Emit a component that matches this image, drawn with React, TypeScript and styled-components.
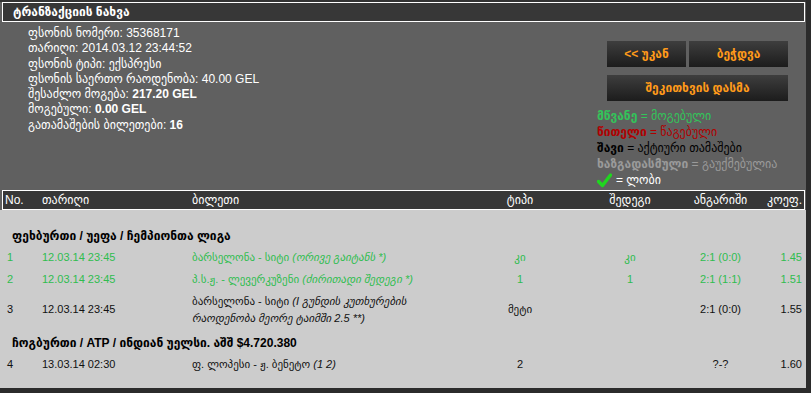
import React from "react";
import styled, { createGlobalStyle } from "styled-components";

const GlobalStyle = createGlobalStyle`
  html, body { margin: 0; padding: 0; background: #2b2b2b; }
  body {
    font-family: "Liberation Sans", "DejaVu Sans", sans-serif;
    font-size: 12px;
    color: #fff;
  }
`;

const Window = styled.div`
  width: 806px;
  height: 388px;
  box-sizing: border-box;
  border-top: 2px solid #333;
  background: #606060;
  display: flex;
  flex-direction: column;
`;

const TitleBar = styled.div`
  margin: 0 1px 0 2px;
  height: 18px;
  line-height: 18px;
  border: 1px solid #fff;
  background: #373737;
  color: #fff;
  font-weight: bold;
  font-size: 12px;
  padding-left: 10px;
`;

const Summary = styled.div`
  display: flex;
  height: 168px;
  box-sizing: border-box;
  padding-top: 4px;
`;

const InfoList = styled.div`
  flex: 1;
  padding-left: 28px;
  line-height: 15.25px;
  font-size: 12px;
`;

const InfoLine = styled.div``;

const Value = styled.span<{ $bold?: boolean }>`
  font-weight: ${(p) => (p.$bold ? "bold" : "normal")};
`;

const SidePanel = styled.div`
  width: 209px;
  padding-top: 15px;
`;

const ButtonGrid = styled.div`
  margin-left: 10px;
  display: grid;
  grid-template-columns: 79px 99px;
  column-gap: 3px;
  row-gap: 8px;
`;

const ActionButton = styled.button<{ $wide?: boolean }>`
  grid-column: ${(p) => (p.$wide ? "1 / -1" : "auto")};
  height: 26px;
  border: none;
  padding: 0;
  background: linear-gradient(#3e3e3e, #1c1c1c);
  color: #ff9a1a;
  font-family: "Liberation Sans", "DejaVu Sans", sans-serif;
  font-weight: bold;
  font-size: 12px;
  cursor: pointer;
`;

const Legend = styled.div`
  margin-top: 7px;
  line-height: 16px;
  font-size: 12px;
`;

const LegendLine = styled.div<{ $color: string }>`
  color: ${(p) => p.$color};
  display: flex;
  align-items: center;
  gap: 4px;
  white-space: nowrap;
`;

const LegendKey = styled.b``;

const TableHead = styled.div`
  margin: 0 1px 0 2px;
  height: 18px;
  border: 1px solid #fff;
  background: #373737;
  display: grid;
  grid-template-columns: 39px 150px 278px 100px 120px 61px 1fr;
  align-items: center;
  font-size: 12px;
  color: #fff;
`;

const HeadCell = styled.div<{ $align?: string; $pl?: number; $pr?: number }>`
  text-align: ${(p) => p.$align || "left"};
  padding-left: ${(p) => p.$pl || 0}px;
  padding-right: ${(p) => p.$pr || 0}px;
  white-space: nowrap;
`;

const TableBody = styled.div`
  flex: 1;
  background: #cccccc;
  padding: 0 2px 0 3px;
`;

const GroupTitle = styled.div<{ $top: number }>`
  padding: ${(p) => p.$top}px 0 2px 9px;
  line-height: 16px;
  font-weight: bold;
  font-size: 12px;
  color: #000;
`;

const BetRow = styled.div<{ $color: string }>`
  display: grid;
  grid-template-columns: 39px 150px 278px 100px 120px 61px 1fr;
  align-items: center;
  padding: 2.5px 0;
  line-height: 17px;
  font-size: 11px;
  color: ${(p) => p.$color};
`;

const Cell = styled.div<{ $align?: string; $pl?: number; $pr?: number }>`
  text-align: ${(p) => p.$align || "left"};
  padding-left: ${(p) => p.$pl || 0}px;
  padding-right: ${(p) => p.$pr || 0}px;
`;

const Note = styled.i``;

const CheckIcon = () => (
  <svg width="15" height="15" viewBox="0 0 15 15">
    <path
      d="M1.5 8.5 L5.5 12.5 L13.5 2"
      fill="none"
      stroke="#1fd61f"
      strokeWidth="3.4"
      strokeLinecap="round"
      strokeLinejoin="round"
    />
  </svg>
);

type Bet = {
  n: string;
  date: string;
  match: string;
  note: string;
  type: string;
  result: string;
  score: string;
  coef: string;
  color: string;
};

const GREEN = "#2fbd4f";

const football: Bet[] = [
  { n: "1", date: "12.03.14 23:45", match: "ბარსელონა - სიტი", note: "(ორივე გაიტანს *)", type: "კი", result: "კი", score: "2:1 (0:0)", coef: "1.45", color: GREEN },
  { n: "2", date: "12.03.14 23:45", match: "პ.ს.ჟ. - ლევერკუზენი", note: "(ძირითადი შედეგი *)", type: "1", result: "1", score: "2:1 (1:1)", coef: "1.51", color: GREEN },
  { n: "3", date: "12.03.14 23:45", match: "ბარსელონა - სიტი", note: "(I გუნდის კუთხურების რაოდენობა მეორე ტაიმში 2.5 **)", type: "მეტი", result: "", score: "2:1 (0:0)", coef: "1.55", color: "#111" },
];

const tennis: Bet[] = [
  { n: "4", date: "13.03.14 02:30", match: "ფ. ლოპესი - ჟ. ბენეტო", note: "(1 2)", type: "2", result: "", score: "?-?", coef: "1.60", color: "#111" },
];

const Row = ({ b }: { b: Bet }) => (
  <BetRow $color={b.color}>
    <Cell $pl={4}>{b.n}</Cell>
    <Cell>{b.date}</Cell>
    <Cell $pr={14}>
      {b.match} <Note>{b.note}</Note>
    </Cell>
    <Cell $align="center">{b.type}</Cell>
    <Cell $align="center">{b.result}</Cell>
    <Cell $align="center">{b.score}</Cell>
    <Cell $align="right" $pr={2}>{b.coef}</Cell>
  </BetRow>
);

export default function App() {
  return (
    <>
      <GlobalStyle />
      <Window>
        <TitleBar>ტრანზაქციის ნახვა</TitleBar>
        <Summary>
          <InfoList>
            <InfoLine>ფსონის ნომერი: <Value>35368171</Value></InfoLine>
            <InfoLine>თარიღი: <Value>2014.03.12 23:44:52</Value></InfoLine>
            <InfoLine>ფსონის ტიპი: <Value>ექსპრესი</Value></InfoLine>
            <InfoLine>ფსონის საერთო რაოდენობა: <Value>40.00 GEL</Value></InfoLine>
            <InfoLine>შესაძლო მოგება: <Value $bold>217.20 GEL</Value></InfoLine>
            <InfoLine>მოგებული: <Value $bold>0.00 GEL</Value></InfoLine>
            <InfoLine>გათამაშების ბილეთები: <Value $bold>16</Value></InfoLine>
          </InfoList>
          <SidePanel>
            <ButtonGrid>
              <ActionButton>&lt;&lt; უკან</ActionButton>
              <ActionButton>ბეჭდვა</ActionButton>
              <ActionButton $wide>შეკითხვის დასმა</ActionButton>
            </ButtonGrid>
            <Legend>
              <LegendLine $color="#33c45a"><span><LegendKey>მწვანე</LegendKey> = მოგებული</span></LegendLine>
              <LegendLine $color="#b00000"><span><LegendKey>წითელი</LegendKey> = წაგებული</span></LegendLine>
              <LegendLine $color="#000"><span><LegendKey>შავი</LegendKey> = აქტიური თამაშები</span></LegendLine>
              <LegendLine $color="#9a9a9a"><span><LegendKey>ხაზგადასმული</LegendKey> = გაუქმებულია</span></LegendLine>
              <LegendLine $color="#fff"><CheckIcon /><span>= ლობი</span></LegendLine>
            </Legend>
          </SidePanel>
        </Summary>
        <TableHead>
          <HeadCell $pl={2}>No.</HeadCell>
          <HeadCell>თარიღი</HeadCell>
          <HeadCell>ბილეთი</HeadCell>
          <HeadCell $align="center">ტიპი</HeadCell>
          <HeadCell $align="center">შედეგი</HeadCell>
          <HeadCell $align="center">ანგარიში</HeadCell>
          <HeadCell $align="right" $pr={2}>კოეფ.</HeadCell>
        </TableHead>
        <TableBody>
          <GroupTitle $top={18}>ფეხბურთი / უეფა / ჩემპიონთა ლიგა</GroupTitle>
          {football.map((b) => (
            <Row key={b.n} b={b} />
          ))}
          <GroupTitle $top={6}>ჩოგბურთი / ATP / ინდიან უელსი. აშშ $4.720.380</GroupTitle>
          {tennis.map((b) => (
            <Row key={b.n} b={b} />
          ))}
        </TableBody>
      </Window>
    </>
  );
}
